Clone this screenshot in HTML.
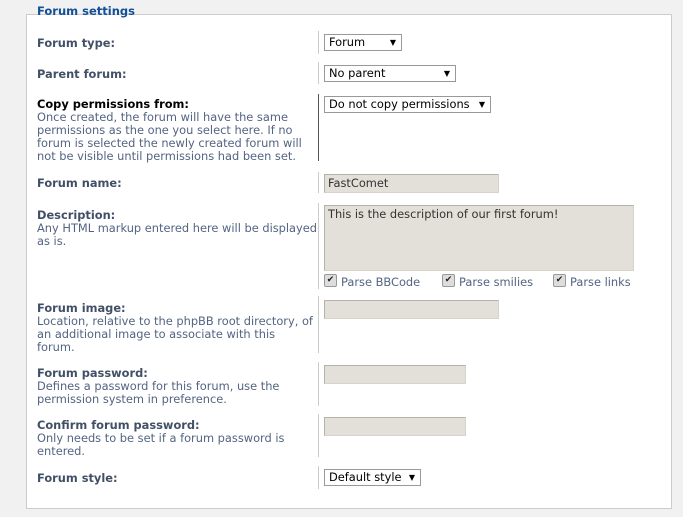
<!DOCTYPE html>
<html><head><meta charset="utf-8"><style>
body{margin:0;width:683px;height:517px;background:#f1f1f1;position:relative;overflow:hidden;font-family:"DejaVu Sans","Liberation Sans",sans-serif;font-size:11.4px;color:#536482}
.panel{position:absolute;left:26px;top:14px;width:644px;height:493px;background:#fff;border:1px solid #ccc}
.leg{position:absolute;left:37px;top:4px;font-size:11.5px;font-weight:bold;color:#115098}
.a{position:absolute;white-space:nowrap}
.b{font-weight:bold;color:#425067}
.k{color:#000}
.d{line-height:13px}
.sep{position:absolute;left:318px;width:1px;background:#ccc}
.sel{position:absolute;height:15px;border:1px solid #999;background:#fff;color:#000;font-size:11.4px;line-height:15px;padding-left:4px;box-sizing:content-box}
.sel:after{content:"▼";position:absolute;right:5px;top:0;font-size:8px}
.inp{position:absolute;background:#e3dfd9;border:1px solid #b5b1ab;border-right-color:#d6d2cc;border-bottom-color:#d6d2cc;color:#333;padding:2px 3px;box-sizing:border-box}
.cb{position:absolute;width:11px;height:11px;border:1px solid #999;background:#ddd;border-radius:2px;font-size:9px;line-height:11px;text-align:center;color:#222}
</style></head><body>
<div class="panel"></div>
<div class="leg">Forum settings</div>

<div class="a b" style="left:37px;top:36px">Forum type:</div>
<div class="sep" style="top:31px;height:23px"></div>
<div class="sel" style="left:324px;top:34px;width:72px">Forum</div>

<div class="a b" style="left:37px;top:67px">Parent forum:</div>
<div class="sep" style="top:62px;height:22px"></div>
<div class="sel" style="left:324px;top:65px;width:126px">No parent</div>

<div class="a b k" style="left:37px;top:97px">Copy permissions from:</div>
<div class="a d" style="left:37px;top:111px">Once created, the forum will have the same<br>permissions as the one you select here. If no<br>forum is selected the newly created forum will<br>not be visible until permissions had been set.</div>
<div class="sep" style="top:94px;height:67px;background:#555"></div>
<div class="sel" style="left:324px;top:96px;width:161px">Do not copy permissions</div>

<div class="a b" style="left:37px;top:176px">Forum name:</div>
<div class="sep" style="top:172px;height:21px"></div>
<div class="inp" style="left:324px;top:174px;width:175px;height:19px;line-height:13px">FastComet</div>

<div class="a b" style="left:37px;top:208px">Description:</div>
<div class="a d" style="left:37px;top:222px">Any HTML markup entered here will be displayed<br>as is.</div>
<div class="sep" style="top:203px;height:86px"></div>
<div class="inp" style="left:324px;top:205px;width:310px;height:66px;line-height:13px">This is the description of our first forum!</div>
<div class="cb" style="left:324px;top:274px">✔</div><div class="a" style="left:341px;top:275px">Parse BBCode</div>
<div class="cb" style="left:442px;top:274px">✔</div><div class="a" style="left:459px;top:275px">Parse smilies</div>
<div class="cb" style="left:553px;top:274px">✔</div><div class="a" style="left:570px;top:275px">Parse links</div>

<div class="a b" style="left:37px;top:301px">Forum image:</div>
<div class="a d" style="left:37px;top:315px">Location, relative to the phpBB root directory, of<br>an additional image to associate with this<br>forum.</div>
<div class="sep" style="top:296px;height:57px"></div>
<div class="inp" style="left:324px;top:300px;width:175px;height:19px"></div>

<div class="a b" style="left:37px;top:366px">Forum password:</div>
<div class="a d" style="left:37px;top:380px">Defines a password for this forum, use the<br>permission system in preference.</div>
<div class="sep" style="top:362px;height:44px"></div>
<div class="inp" style="left:324px;top:365px;width:142px;height:19px"></div>

<div class="a b" style="left:37px;top:418px">Confirm forum password:</div>
<div class="a d" style="left:37px;top:432px">Only needs to be set if a forum password is<br>entered.</div>
<div class="sep" style="top:414px;height:43px"></div>
<div class="inp" style="left:324px;top:417px;width:142px;height:19px"></div>

<div class="a b" style="left:37px;top:471px">Forum style:</div>
<div class="sep" style="top:466px;height:23px"></div>
<div class="sel" style="left:324px;top:469px;width:91px">Default style</div>
</body></html>
